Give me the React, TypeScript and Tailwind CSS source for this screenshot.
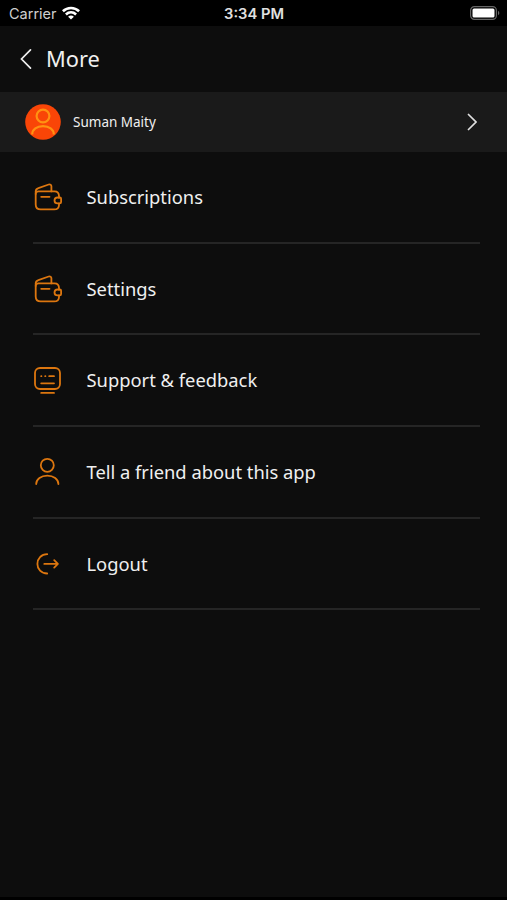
import React from 'react'

const WalletIcon = () => (
    <>
        <path d="M2.7 12V9.3c0-1.7 1.1-2.7 2.7-3.2L15.7 2.5c1.5-.4 2.700.4 2.700 1.800v5.100" />
        <path d="M26 15.8v-1.700c0-3-1.700-4.700-4.500-4.700H5.400C3.700 9.4 2.700 10.400 2.700 12v10.400c0 3.200 1.800 5 5 5h13.400c3 0 4.900-1.700 4.900-4.500v-1.600" />
        <path d="M24.600 15.500h2.200c.8 0 1.300.5 1.300 1.300v3.300c0 .8-.5 1.300-1.300 1.300h-2.200c-1.800 0-3.100-1.200-3.100-2.950s1.300-2.950 3.100-2.950z" />
        <path d="M8.2 14.800h8.300" />
    </>
)

const FeedbackIcon = () => (
    <>
        <rect x="2" y="2" width="25" height="21" rx="5" />
        <path d="M8.200 10.200h.2M12.200 10.200h.2M16.200 10.200h4.800M8.200 17.300h12.800M8.200 26.900h12.800" />
    </>
)

const PersonIcon = () => (
    <>
        <circle cx="14.3" cy="8.3" r="6.5" />
        <path d="M3.200 27.100c0-5 4.900-8.500 11.100-8.500s11.100 3.500 11.100 8.500" />
    </>
)

const LogoutIcon = () => (
    <>
        <path d="M14.2 5.2C8.200 5.200 4.400 9.600 4.400 14.900s3.800 9.600 9.800 9.600" />
        <path d="M11.3 14.900h13M21.200 11.200l3.700 3.700-3.700 3.700" />
    </>
)

const menuItems = [
    { title: 'Subscriptions', icon: <WalletIcon /> },
    { title: 'Settings', icon: <WalletIcon /> },
    { title: 'Support & feedback', icon: <FeedbackIcon /> },
    { title: 'Tell a friend about this app', icon: <PersonIcon /> },
    { title: 'Logout', icon: <LogoutIcon /> },
]

const StatusBar = () => (
    <div className="grid h-[26px] grid-cols-3 items-center bg-black pl-[9px] pr-[7px] font-['Inter',sans-serif] text-[#e0e0e0]">
        <div className="flex items-center gap-[5px]">
            <span className="pt-px text-[14.5px] text-[#cfcfcf]">Carrier</span>
            <svg width="18" height="14" viewBox="0 0 18 14" fill="none" stroke="#fff" strokeWidth="2.6">
                <path d="M.9 5.3C5.500.9 12.500.9 17.100 5.300M3.900 8.500c3-2.800 7.200-2.800 10.200 0" />
                <path d="M9 13.600l-2.900-2.900c1.700-1.500 4.100-1.500 5.800 0z" fill="#fff" stroke="none" />
            </svg>
        </div>
        <span className="pr-px pt-[2px] text-center text-[14.7px] font-semibold">3:34 PM</span>
        <svg className="justify-self-end" width="30" height="14" viewBox="0 0 30 14">
            <rect x=".6" y=".6" width="25.8" height="12.8" rx="3.8" fill="none" stroke="#666" strokeWidth="1.2" />
            <rect x="2.5" y="2.5" width="22" height="9" rx="1.5" fill="#fff" />
            <path d="M28 4.800c1.800.7 1.800 3.700 0 4.400z" fill="#666" />
        </svg>
    </div>
)

const App = () => {
    return (
        <div className="flex h-[900px] w-[507px] flex-col overflow-hidden border-b-[3px] border-black bg-[#0d0d0d] font-['Noto_Sans',sans-serif] text-[#f0f0f0]">
            <StatusBar />

            {/* Header */}
            <header className="flex h-[66px] items-center pl-[20px]">
                <svg width="12" height="22" viewBox="0 0 12 22" fill="none" stroke="#eee" strokeWidth="1.7" strokeLinecap="round">
                    <path d="M10.5 1.8L1.500 11l9 9.200" />
                </svg>
                <h1 className="ml-[14px] text-[21.8px] leading-none">More</h1>
            </header>

            {/* Profile */}
            <div className="flex h-[60px] items-center bg-[#1a1a1a] pl-[25px] pr-[30px]">
                <svg width="36" height="36" viewBox="0 0 36 36" fill="none" stroke="#ff9212" strokeWidth="2.2">
                    <circle cx="18" cy="18" r="17.8" fill="#f94507" stroke="none" />
                    <circle cx="18" cy="12" r="6.4" />
                    <path d="M7.200 30.500c0-5 4.700-8.400 10.800-8.400s10.800 3.400 10.800 8.400" />
                </svg>
                <span className="ml-[12px] flex-1 pt-px text-[13.5px]">Suman Maity</span>
                <svg width="10" height="18" viewBox="0 0 10 18" fill="none" stroke="#e0e0e0" strokeWidth="1.7" strokeLinecap="round">
                    <path d="M1.500 1.500L9 9l-7.500 7.500" />
                </svg>
            </div>

            {/* Menu */}
            <ul className="pl-[33px] pr-[27px]">
                {menuItems.map((item) => (
                    <li key={item.title} className="flex h-[91.7px] items-center border-b-2 border-[#252525]">
                        <svg className="mt-px" width="30" height="30" viewBox="0 0 30 30" fill="none" stroke="#dc760f" strokeWidth="1.8" strokeLinecap="round" strokeLinejoin="round">
                            {item.icon}
                        </svg>
                        <span className="ml-[23.5px] text-[18.35px]">{item.title}</span>
                    </li>
                ))}
            </ul>
        </div>
    )
}

export default App
